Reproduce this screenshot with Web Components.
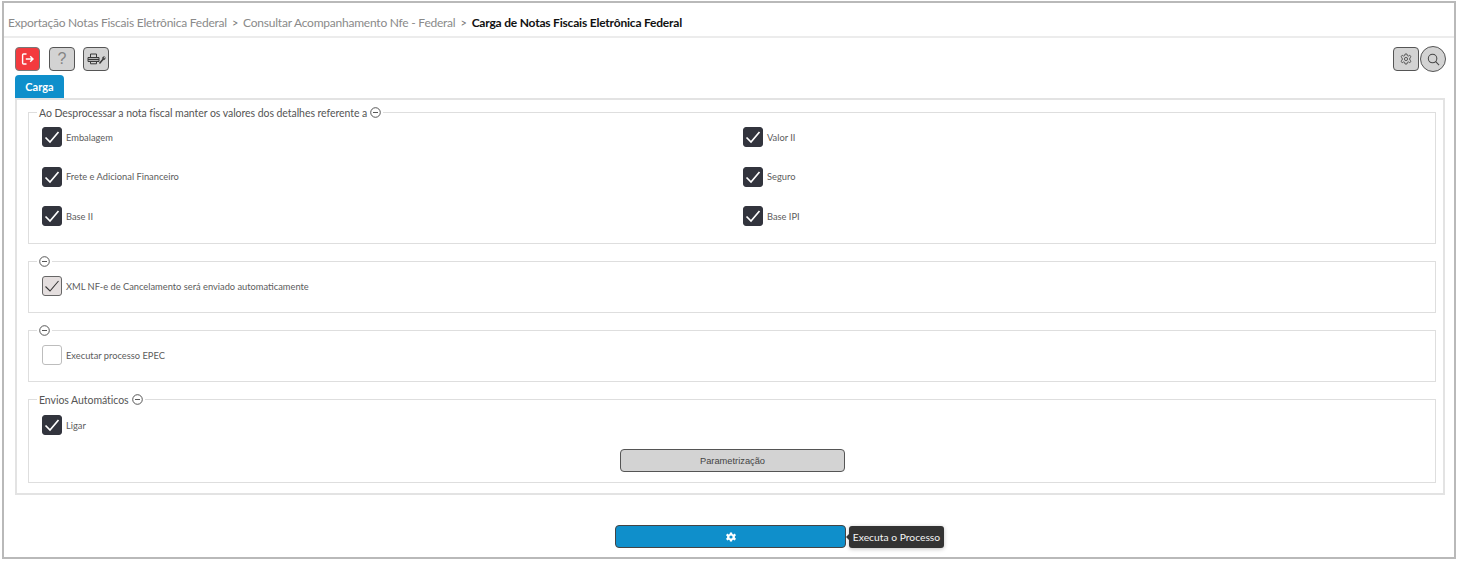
<!DOCTYPE html>
<html lang="pt-BR">
<head>
<meta charset="utf-8">
<title>Carga de Notas Fiscais Eletrônica Federal</title>
<style>
	html, body { margin: 0; padding: 0; background: #fff; }
	body { font-family: Lato, "Open Sans", sans-serif; color: #444; }
</style>
</head>
<body>
<app-page>
	<app-breadcrumb slot="top">
		<span>Exportação Notas Fiscais Eletrônica Federal</span>
		<span>Consultar Acompanhamento Nfe - Federal</span>
		<b>Carga de Notas Fiscais Eletrônica Federal</b>
	</app-breadcrumb>
	<app-toolbar slot="top"></app-toolbar>
	<app-tab slot="top">Carga</app-tab>

	<app-group legend="Ao Desprocessar a nota fiscal manter os valores dos detalhes referente a" style="--box-h:138px;--pad-top:8px">
		<check-grid>
			<app-check checked>Embalagem</app-check>
			<app-check checked>Valor II</app-check>
			<app-check checked>Frete e Adicional Financeiro</app-check>
			<app-check checked>Seguro</app-check>
			<app-check checked>Base II</app-check>
			<app-check checked>Base IPI</app-check>
		</check-grid>
	</app-group>
	<app-group style="--box-h:58px;--pad-top:8px;--gap-top:11px">
		<app-check soft>XML NF-e de Cancelamento será enviado automaticamente</app-check>
	</app-group>
	<app-group style="--box-h:58px;--pad-top:8px;--gap-top:11px">
		<app-check>Executar processo EPEC</app-check>
	</app-group>
	<app-group legend="Envios Automáticos" style="--box-h:90px;--pad-top:9px;--gap-top:11px">
		<app-check checked>Ligar</app-check>
		<param-button>Parametrização</param-button>
	</app-group>

	<run-button slot="bottom" tip="Executa o Processo"></run-button>
</app-page>

<script>
class AppPage extends HTMLElement {
	constructor() {
		super();
		this.attachShadow({ mode: 'open' });
		this.shadowRoot.innerHTML = `
			<style>
				:host {
					display: block;
					box-sizing: border-box;
					width: 1454px;
					height: 558px;
					margin: 1px 0 0 2px;
					border: 2px solid #b9b9b9;
				}
				.panel {
					box-sizing: border-box;
					height: 397px;
					margin: 0 9px 0 11px;
					padding: 6px 7px 0 11px;
					border: 2px solid #e3e3e3;
				}
				.bottom { display: flex; padding: 30px 0 0 611px; }
			</style>
			<slot name="top"></slot>
			<div class="panel"><slot></slot></div>
			<div class="bottom"><slot name="bottom"></slot></div>
		`;
	}
}

class AppBreadcrumb extends HTMLElement {
	constructor() {
		super();
		this.attachShadow({ mode: 'open' });
		this.shadowRoot.innerHTML = `
			<style>
				:host {
					display: flex;
					align-items: center;
					box-sizing: border-box;
					height: 35px;
					padding: 5px 0 0 4px;
					border-bottom: 2px solid #ececec;
					font: 12px Lato, sans-serif;
					letter-spacing: -.23px;
					color: #8a8a8a;
				}
				::slotted(span)::after { content: ">"; margin: 0 5px; font-size: 11px; color: #777; }
				::slotted(b) { color: #111; font-weight: 700; letter-spacing: -.2px; }
			</style>
			<slot></slot>
		`;
	}
}

class AppToolbar extends HTMLElement {
	constructor() {
		super();
		this.attachShadow({ mode: 'open' });
		this.shadowRoot.innerHTML = `
			<style>
				:host {
					display: flex;
					align-items: center;
					box-sizing: border-box;
					height: 37px;
					padding: 9px 8px 4px 11px;
				}
				.btn {
					box-sizing: border-box;
					display: flex;
					align-items: center;
					justify-content: center;
					width: 26px;
					height: 24px;
					margin-right: 8px;
					border: 1px solid #555;
					border-radius: 4px;
					background: #d3d3d3;
					color: #444;
				}
				.red { background: #f33a3e; border-color: #777; width: 25px; margin-right: 9px; }
				.help { font: 16px "Liberation Sans", sans-serif; color: #858585; }
				.spacer { flex: 1; }
				.gear { margin-right: 1px; }
				.search { border-radius: 50%; margin-right: 0; width: 26px; height: 26px; }
				svg { display: block; }
			</style>
			<div class="btn red">
				<svg width="14" height="14" viewBox="0 0 14 14" fill="none" stroke="#fff" stroke-width="1.4">
					<path d="M5.5 2H2.6Q1.6 2 1.6 3V11Q1.6 12 2.6 12H5.5"/>
					<path d="M4.8 7H12M9.2 4.2L12 7L9.2 9.8"/>
				</svg>
			</div>
			<div class="btn help">?</div>
			<div class="btn">
				<svg width="19" height="12" viewBox="0 0 19 12" fill="none" stroke="#3a3a3a" stroke-width="1">
					<path d="M3.5 4V1H9.5V4"/>
					<path d="M1 4.5H12V8.5H1Z"/>
					<path d="M1 6.5H12" stroke-width="1.4"/>
					<path d="M3.5 8.5V10.8H9.5V8.5"/>
					<path d="M12.5 10.5L16 6.2" stroke-width="1.5"/>
					<path d="M15.2 5.4Q15.4 3.4 17.6 3.6L16.5 5L17.2 5.7L18.4 4.6Q18.6 6.9 16.4 6.9" fill="#3a3a3a" stroke-width=".4"/>
				</svg>
			</div>
			<div class="spacer"></div>
			<div class="btn gear">
				<svg width="12" height="12" viewBox="0 0 24 24" fill="none" stroke="#555" stroke-width="1.9" stroke-linejoin="round">
					<circle cx="12" cy="12" r="3.2"/>
					<path d="M10 2H14L14.6 5.2L16.8 6.2L19.6 4.4L22 7.6L19.6 9.8V14.2L22 16.4L19.6 19.6L16.8 17.8L14.6 18.8L14 22H10L9.4 18.8L7.2 17.8L4.4 19.6L2 16.4L4.4 14.2V9.8L2 7.6L4.4 4.4L7.2 6.2L9.4 5.2Z"/>
				</svg>
			</div>
			<div class="btn search">
				<svg width="13" height="13" viewBox="0 0 14 14" fill="none" stroke="#444" stroke-width="1.1">
					<circle cx="6" cy="6" r="4.6"/>
					<path d="M9.4 9.4L13 13"/>
				</svg>
			</div>
		`;
	}
}

class AppTab extends HTMLElement {
	constructor() {
		super();
		this.attachShadow({ mode: 'open' });
		this.shadowRoot.innerHTML = `
			<style>
				:host {
					display: flex;
					align-items: center;
					justify-content: center;
					box-sizing: border-box;
					width: 49px;
					height: 23px;
					margin-left: 11px;
					border-radius: 4px 4px 0 0;
					background: #0f8fcb;
					color: #fff;
					font: 700 11px Lato, sans-serif;
				}
			</style>
			<slot></slot>
		`;
	}
}

class AppGroup extends HTMLElement {
	constructor() {
		super();
		this.attachShadow({ mode: 'open' });
		const legend = this.getAttribute('legend') || '';
		this.shadowRoot.innerHTML = `
			<style>
				:host { display: block; margin-top: var(--gap-top, 0); }
				fieldset {
					box-sizing: border-box;
					height: var(--box-h);
					margin: 0;
					padding: var(--pad-top) 0 0 13px;
					border: 1px solid #dedede;
				}
				legend {
					display: flex;
					align-items: center;
					gap: 3px;
					padding: 0 2px;
					margin-left: -5px;
					height: 13px;
					font: 10.5px Lato, sans-serif;
					letter-spacing: -.05px;
					color: #555;
				}
				svg { display: block; }
			</style>
			<fieldset>
				<legend>
					${legend ? `<span>${legend}</span>` : ''}
					<svg width="11" height="11" viewBox="0 0 11 11" fill="none" stroke="#444" stroke-width=".9">
						<circle cx="5.5" cy="5.5" r="4.8"/>
						<path d="M3 5.5H8"/>
					</svg>
				</legend>
				<slot></slot>
			</fieldset>
		`;
	}
}

class CheckGrid extends HTMLElement {
	constructor() {
		super();
		this.attachShadow({ mode: 'open' });
		this.shadowRoot.innerHTML = `
			<style>
				:host {
					display: grid;
					grid-template-columns: 701px 1fr;
					grid-auto-rows: 20px;
					row-gap: 19.5px;
				}
			</style>
			<slot></slot>
		`;
	}
}

class AppCheck extends HTMLElement {
	constructor() {
		super();
		this.attachShadow({ mode: 'open' });
		const on = this.hasAttribute('checked');
		const soft = this.hasAttribute('soft');
		this.shadowRoot.innerHTML = `
			<style>
				:host {
					display: flex;
					align-items: center;
					gap: 4px;
					height: 20px;
					font: 9.3px Lato, sans-serif;
					color: #5c5c5c;
				}
				.box {
					box-sizing: border-box;
					width: 20px;
					height: 20px;
					border: 1px solid #bdbdbd;
					border-radius: 3px;
					background: #fff;
				}
				.on { background: #32343d; border-color: #32343d; }
				.soft { background: #e4dede; border-color: #666; }
				svg { display: block; }
			</style>
			<div class="box ${on ? 'on' : ''} ${soft ? 'soft' : ''}">
				${on || soft ? `<svg width="18" height="18" viewBox="0 0 18 18" fill="none" stroke="${on ? '#fff' : '#333'}" stroke-width="${on ? 1.7 : 1.1}">
					<path d="M2.5 9.5L7 14L15.5 4"/>
				</svg>` : ''}
			</div>
			<span><slot></slot></span>
		`;
	}
}

class ParamButton extends HTMLElement {
	constructor() {
		super();
		this.attachShadow({ mode: 'open' });
		this.shadowRoot.innerHTML = `
			<style>
				:host {
					display: flex;
					align-items: center;
					justify-content: center;
					box-sizing: border-box;
					width: 225px;
					height: 23px;
					margin: 14px 0 0 578px;
					border: 1px solid #555;
					border-radius: 4px;
					background: #d3d3d3;
					font: 9.3px "Liberation Sans", sans-serif;
					color: #444;
				}
			</style>
			<slot></slot>
		`;
	}
}

class RunButton extends HTMLElement {
	constructor() {
		super();
		this.attachShadow({ mode: 'open' });
		this.shadowRoot.innerHTML = `
			<style>
				:host {
					display: flex;
					align-items: center;
					justify-content: center;
					position: relative;
					box-sizing: border-box;
					width: 231px;
					height: 23px;
					border: 1px solid #444;
					border-radius: 4px;
					background: #0f8fcb;
				}
				.tip {
					position: absolute;
					left: 233px;
					top: 0;
					box-sizing: border-box;
					display: flex;
					align-items: center;
					justify-content: center;
					width: 95px;
					height: 22px;
					border-radius: 3px;
					background: #333;
					color: #f4f4f4;
					font: 10.3px Lato, sans-serif;
					box-shadow: 0 1px 4px rgba(0, 0, 0, .25);
				}
				.tip::before {
					content: "";
					position: absolute;
					left: -3px;
					top: 8px;
					border-style: solid;
					border-width: 3px 3px 3px 0;
					border-color: transparent #333 transparent transparent;
				}
				svg { display: block; }
			</style>
			<svg width="10" height="10" viewBox="0 0 24 24" fill="#fff" fill-rule="evenodd">
				<path d="M9.5 1H14.5L15.3 4.6L17.9 5.7L21 3.7L24 8L21.3 10.2V13.8L24 16L21 20.3L17.9 18.3L15.3 19.4L14.5 23H9.5L8.7 19.4L6.1 18.3L3 20.3L0 16L2.7 13.8V10.2L0 8L3 3.7L6.1 5.7L8.7 4.6ZM12 8.2A3.8 3.8 0 1 0 12 15.8A3.8 3.8 0 1 0 12 8.2Z"/>
			</svg>
			<div class="tip">${this.getAttribute('tip')}</div>
		`;
	}
}

customElements.define('app-page', AppPage);
customElements.define('app-breadcrumb', AppBreadcrumb);
customElements.define('app-toolbar', AppToolbar);
customElements.define('app-tab', AppTab);
customElements.define('app-group', AppGroup);
customElements.define('check-grid', CheckGrid);
customElements.define('app-check', AppCheck);
customElements.define('param-button', ParamButton);
customElements.define('run-button', RunButton);
</script>
</body>
</html>
